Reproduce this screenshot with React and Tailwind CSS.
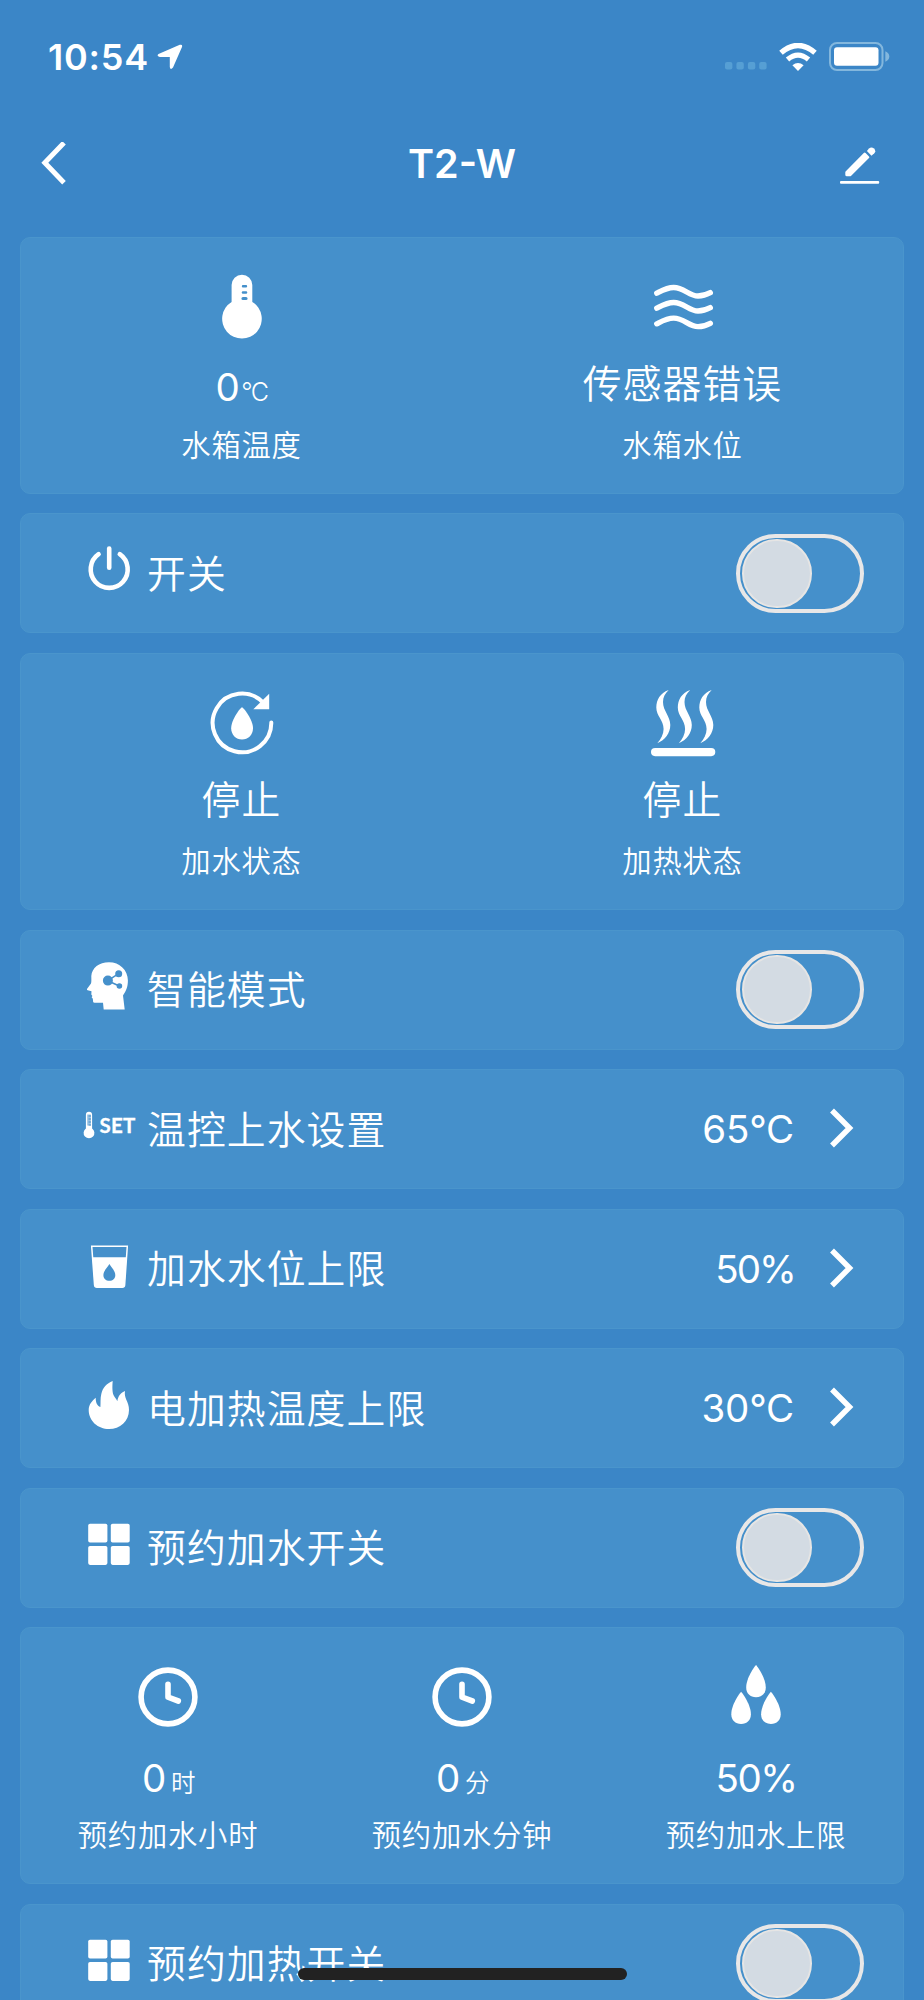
import React from 'react';

const ThermometerIcon = () => (
  <svg className="w-20 h-20" viewBox="0 0 80 80" fill="white">
    <path
      fillRule="evenodd"
      d="M29.6 34.9V18.1a10.3 10.3 0 0 1 20.7 0V34.9A19.8 19.8 0 1 1 29.6 34.9ZM41 18a1.2 1.2 0 0 0 0 2.4h3a1.2 1.2 0 0 0 0-2.4ZM41 24.2a1.3 1.3 0 0 0 0 2.6h3a1.3 1.3 0 0 0 0-2.6ZM41 29.9a1.6 1.6 0 0 0 0 3.2h3a1.6 1.6 0 0 0 0-3.2Z"
    />
  </svg>
);

const WavesIcon = () => (
  <svg className="w-20 h-20" viewBox="0 0 80 80" fill="none" stroke="white" strokeWidth="5.4" strokeLinecap="round">
    <path d="M13.8 26.2C19 23.5 24 20.5 30.7 20.5C41 20.5 46 29 55 29C60 29 64 27.5 67.3 25.7" />
    <path d="M13.8 41.2C19 38.5 24 35.5 30.7 35.5C41 35.5 46 44 55 44C60 44 64 42.5 67.3 40.7" />
    <path d="M13.8 56.8C19 54.1 24 51.1 30.7 51.1C41 51.1 46 59.6 55 59.6C60 59.6 64 58.1 67.3 56.3" />
  </svg>
);

const RefillIcon = () => (
  <svg className="w-20 h-20" viewBox="0 0 80 80" fill="white">
    <path d="M69.3 39.6A29.3 29.3 0 1 1 61 19.5" fill="none" stroke="white" strokeWidth="4" strokeLinecap="round" />
    <path d="M67.2 10.8V26.3H51.3Z" />
    <path d="M40 24.3C41.2 24.3 51 36.5 51 45.2C51 52 46 56.4 40 56.4S29.2 52 29.2 45.2C29.2 36.5 38.8 24.3 40 24.3Z" />
  </svg>
);

const HeatIcon = () => (
  <svg className="w-20 h-20" viewBox="0 0 80 80" fill="white">
    {[0, 21.5, 43].map((x) => (
      <path
        key={x}
        transform={`translate(${x} 0)`}
        d="M25.7 7C17 10 13.3 17 13.3 24.5C13.3 33 20.6 37 20.6 46C20.6 51 18 56 14.3 60.2C22 57 27.3 50 27.3 42C27.3 33 20 28 20 19C20 14 22 10.5 25.7 7Z"
      />
    ))}
    <rect x="8" y="65" width="64.3" height="8.2" rx="4.1" />
  </svg>
);

const ClockIcon = () => (
  <svg className="w-20 h-20" viewBox="0 0 80 80" fill="none" stroke="white" strokeWidth="5.6" strokeLinecap="round" strokeLinejoin="round">
    <circle cx="40" cy="40" r="26.9" />
    <path d="M40 27.3V40.2L50.3 44" />
  </svg>
);

const DropsIcon = () => (
  <svg className="w-20 h-20" viewBox="0 0 80 80" fill="white">
    {['40 8', '25.1 34.8', '54.9 34.8'].map((pos) => (
      <path key={pos} transform={`translate(${pos})`} d="M0 0C1.5 1.5 9.8 13 9.8 22.5C9.8 28.5 5.8 32.2 0 32.2S-9.8 28.5-9.8 22.5C-9.8 13-1.5 1.5 0 0Z" />
    ))}
  </svg>
);

const PowerIcon = () => (
  <svg className="w-15 h-15" viewBox="0 0 60 60" fill="none" stroke="white" strokeWidth="4.6" strokeLinecap="round">
    <path d="M19.6 15.2A18.5 18.5 0 1 0 40.8 15.2" />
    <path d="M30.2 9.6V28.7" />
  </svg>
);

const HeadIcon = () => (
  <svg className="w-15 h-15" viewBox="0 0 60 60">
    <path
      fill="white"
      d="M30 6.3C40.5 6.3 48.9 14 48.9 24.5C48.9 31 47 35 44 39.5L45.7 53.4H24.7L24 46.7H15.5C14 46.7 14 45.5 14 44L13.7 42.5L12.6 41.3L13.4 40L12.3 38.5L12.5 35.2L8.7 34.3C7.8 34 7.8 33.3 8.3 32.6L12 27.5C12.6 26 12.3 22 12.3 20C13 12 20 6.3 30 6.3Z"
    />
    <g fill="#4590cb" stroke="#4590cb" strokeWidth="1.6">
      <path d="M28.7 24.7L39.7 17.7M28.7 24.7L40.3 30" />
      <circle cx="28.9" cy="24.6" r="4.2" />
      <circle cx="39.7" cy="17.7" r="2.7" />
      <circle cx="40.4" cy="30" r="2" />
    </g>
  </svg>
);

const TempSetIcon = () => (
  <svg className="w-15 h-15" viewBox="0 0 60 60" fill="white">
    <path d="M6.9 33.4V19.8a3.1 3.1 0 0 1 6.2 0V33.4A5.4 5.4 0 1 1 6.9 33.4Z" />
    <path d="M10 19.5V30.5" stroke="#4590cb" strokeWidth="3.6" opacity="0.55" />
    <path d="M9.6 21H12M9.6 24H12M9.6 27H12M9.6 30H12" stroke="#4590cb" strokeWidth="1" />
    <text x="20.6" y="38.3" textLength="35.6" className="font-['Lato'] font-bold text-[20.5px]" stroke="white" strokeWidth="0.3">SET</text>
  </svg>
);

const CupIcon = () => (
  <svg className="w-15 h-15" viewBox="0 0 60 60">
    <path d="M12.7 11.2H48.3L45.6 50.2Q45.4 52.3 43.3 52.3H17.9Q15.8 52.3 15.6 50.2Z" fill="none" stroke="white" strokeWidth="1.5" />
    <path d="M13.4 22.2H47.6L45.6 50.2Q45.4 52.3 43.3 52.3H17.9Q15.8 52.3 15.6 50.2Z" fill="white" />
    <path d="M30.4 29C31.5 31.2 36.3 35.7 36.3 40.2C36.3 43.7 33.8 45.7 30.4 45.7S24.4 43.7 24.4 40.2C24.4 35.7 29.3 31.2 30.4 29Z" fill="#4590cb" />
  </svg>
);

const FireIcon = () => (
  <svg className="w-15 h-15" viewBox="0 0 60 60" fill="white">
    <path d="M33.7 7C33.3 12 33 18.5 35 22C36 24 37.5 25 38.3 27.3C39 22 42 18.5 46 17C45.5 20 46 22.5 47.2 25.5C48.8 29 50 31.5 50 36C50 47.5 41 55 30 55S9.7 47 9.7 36C9.7 30.5 13 27 16.7 23.7C16.7 28.5 18 31.5 21.4 33C21.7 29 21.2 24.5 22.3 20C23.8 13.5 27.5 9.5 33.7 7Z" />
  </svg>
);

const GridIcon = () => (
  <svg className="w-15 h-15" viewBox="0 0 60 60" fill="white">
    <rect x="9.2" y="9.8" width="19.2" height="18.7" rx="1.8" />
    <rect x="31.8" y="9.8" width="18.9" height="18.7" rx="1.8" />
    <rect x="9.2" y="32" width="19.2" height="18.9" rx="1.8" />
    <rect x="31.8" y="32" width="18.9" height="18.9" rx="1.8" />
  </svg>
);

const Switch = () => (
  <button className="flex items-center w-[128px] h-[79px] rounded-full border-4 border-[#e8e7e7] pl-[2px]">
    <span className="w-[70px] h-[69px] rounded-full border-2 border-[#e6e5e4] bg-[#d3dbe3]"></span>
  </button>
);

const Card = ({ className, children }) => (
  <div className={`shrink-0 rounded-[10px] border border-[#4a95cc] bg-[#4590cb] ${className}`}>{children}</div>
);

const Row = ({ icon, label, value }) => (
  <Card className="flex items-center h-[120px] pl-[58px] pr-[39px]">
    <div className="w-15 mb-2">{icon}</div>
    <span className="ml-[8px] mt-[1px] text-[38.8px] leading-[56px] tracking-[1.1px] font-[350]">{label}</span>
    {value ? (
      <div className="ml-auto mr-[9px] flex items-center">
        <span className={`text-[38.5px] leading-[56px] font-normal ${value.endsWith('%') ? 'mr-[-1px] tracking-[-1.9px]' : 'tracking-[-0.2px]'}`}>{value}</span>
        <svg className="ml-[35px] mb-[2px] w-[26px] h-[40px]" viewBox="0 0 26 40" fill="none" stroke="white" strokeWidth="5.5">
          <path d="M3 2.5L20.5 20L3 37.5" />
        </svg>
      </div>
    ) : (
      <div className="ml-auto">
        <Switch />
      </div>
    )}
  </Card>
);

const Stat = ({ icon, value, unit, text, label }) => (
  <div className="flex flex-1 flex-col items-center pt-[29.2px]">
    {icon}
    <div className="mt-3 h-[56px] leading-[56px]">
      {text ? (
        <p className="-mt-[2.6px] text-[38.8px] tracking-[1.1px] font-[350]">{text}</p>
      ) : (
        <p className="mt-[0.4px] text-[38.5px] tracking-[-1.5px] font-normal">
          {value}
          {unit}
        </p>
      )}
    </div>
    <p className="mt-[6.8px] text-[29.3px] leading-[48px] tracking-[0.8px] font-[350]">{label}</p>
  </div>
);

const StatusBar = () => (
  <div className="flex items-center h-[113px] pl-[48px] pr-[34px]">
    <span className="text-[36px] font-semibold tracking-[0.8px]">10:54</span>
    <svg className="ml-[8px] w-[26px] h-[26px]" viewBox="0 0 26 26" fill="white">
      <path d="M1.5 10L22.8 0.8Q25.8 0 25 3L16 23.5Q13.4 26.5 12.8 23V12.9H2.8Q-0.8 12.4 1.5 10Z" />
    </svg>
    <svg className="ml-auto mt-[19px] w-[42px] h-[8px]" viewBox="0 0 42 8" fill="#569fd4">
      {[0, 11.4, 22.9, 34.2].map((x) => (
        <rect key={x} x={x} width="7.4" height="7.4" rx="2" />
      ))}
    </svg>
    <svg className="ml-[12px] w-[38px] h-[28px]" viewBox="0 0 38 28">
      <g fill="none" stroke="white">
        <path d="M2 9.8Q19-4.8 36 9.8" strokeWidth="5.4" />
        <path d="M8.5 16.6Q19 7.7 29.5 16.6" strokeWidth="5.2" />
      </g>
      <path d="M13.4 22.2Q19 17.8 24.6 22.2L19 28Z" fill="white" />
    </svg>
    <svg className="ml-[12px] w-[61px] h-[29px]" viewBox="0 0 61 29">
      <rect x="1" y="1" width="52.5" height="27" rx="7" fill="none" stroke="#83b7dd" strokeWidth="2" />
      <rect x="5" y="5.2" width="44.5" height="18.5" rx="3" fill="white" />
      <path d="M56.3 9.3Q60.3 11 60.3 14.5T56.3 19.8Z" fill="#83b7dd" />
    </svg>
  </div>
);

const NavBar = () => (
  <div className="flex items-center justify-between h-[102px] pl-[40px] pr-[43px]">
    <svg className="w-[42px] h-[44px]" viewBox="0 0 42 44" fill="none" stroke="white" strokeWidth="5">
      <path d="M24 0.8L4.8 20.8L24 40.8" />
    </svg>
    <h1 className="ml-[2px] mt-[1px] text-[39.5px] font-semibold">T2-W</h1>
    <svg className="mt-[4px] w-[41px] h-[38px]" viewBox="0 0 41 38" fill="white">
      <path d="M5.8 24.2L23.8 6Q24.7 5.1 25.6 6L29 9.4Q29.9 10.2 29 11.1L11.2 28.7Q10.6 29.3 9.7 29.3H6.8Q5.3 29.3 5.3 27.8V25.3Q5.3 24.7 5.8 24.2Z" />
      <path d="M26.9 4L29 1.6Q31.4-0.6 34 1.6Q36.4 4.2 34.3 6.3L31.5 8.7Z" />
      <rect x="0" y="34" width="39.2" height="2.8" rx="1" />
    </svg>
  </div>
);

const App = () => {
  return (
    <div className="relative h-[2000px] w-[924px] overflow-hidden bg-[#3b86c7] text-white font-['Inter','Noto_Sans_CJK_SC',sans-serif]">
      <StatusBar />
      <NavBar />

      <div className="flex flex-col gap-[19.5px] mt-[21.7px] ml-[20px] w-[884px]">
        <Card className="flex h-[257.2px]">
          <Stat
            icon={<ThermometerIcon />}
            value="0"
            unit={<span className="ml-[3px] text-[25px] font-light">°C</span>}
            label="水箱温度"
          />
          <Stat icon={<WavesIcon />} text="传感器错误" label="水箱水位" />
        </Card>

        <Row icon={<PowerIcon />} label="开关" />

        <Card className="flex h-[257.2px]">
          <Stat icon={<RefillIcon />} text="停止" label="加水状态" />
          <Stat icon={<HeatIcon />} text="停止" label="加热状态" />
        </Card>

        <Row icon={<HeadIcon />} label="智能模式" />
        <Row icon={<TempSetIcon />} label="温控上水设置" value="65°C" />
        <Row icon={<CupIcon />} label="加水水位上限" value="50%" />
        <Row icon={<FireIcon />} label="电加热温度上限" value="30°C" />
        <Row icon={<GridIcon />} label="预约加水开关" />

        <Card className="flex h-[257.2px]">
          <Stat
            icon={<ClockIcon />}
            value="0"
            unit={<span className="ml-[6px] text-[24.5px] font-[350]">时</span>}
            label="预约加水小时"
          />
          <Stat
            icon={<ClockIcon />}
            value="0"
            unit={<span className="ml-[6px] text-[24.5px] font-[350]">分</span>}
            label="预约加水分钟"
          />
          <Stat icon={<DropsIcon />} value="50%" label="预约加水上限" />
        </Card>

        <Row icon={<GridIcon />} label="预约加热开关" />
      </div>

      {/* Home indicator */}
      <div className="absolute bottom-[20px] left-[298px] w-[329px] h-[12px] rounded-full bg-[#222222]"></div>
    </div>
  );
};

export default App;
